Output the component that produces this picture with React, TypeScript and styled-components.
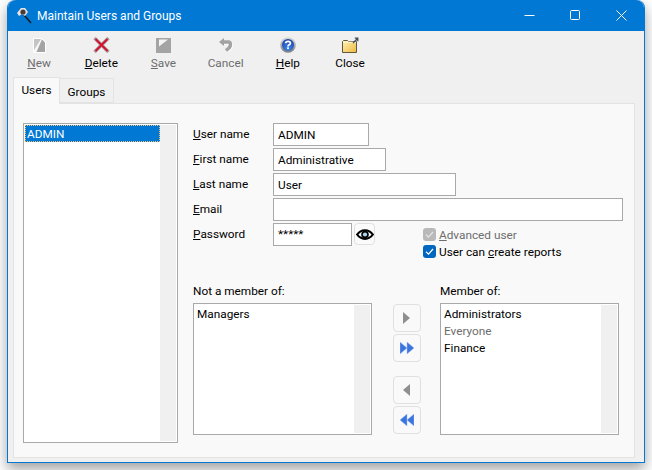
import styled, { createGlobalStyle } from "styled-components";
import { ReactNode } from "react";

const GlobalStyle = createGlobalStyle`
    html, body {
        margin: 0;
        padding: 0;
        background: #ffffff;
    }
    body {
        width: 652px;
        height: 470px;
        overflow: hidden;
        font-family: Roboto, "Noto Sans", "Liberation Sans", sans-serif;
        font-size: 11.8px;
        color: #000000;
    }
`;

const Window = styled.div`
    box-sizing: border-box;
    width: 638px;
    height: 463px;
    margin-left: 7px;
    display: flex;
    flex-direction: column;
    background: #f0f0f0;
    border: 1px solid #0078d4;
    border-top: 0;
    border-radius: 8px 8px 0 0;
    box-shadow: 0 6px 14px rgba(0, 0, 0, 0.38);
`;

const TitleBar = styled.div`
    height: 31px;
    flex: none;
    display: flex;
    align-items: center;
    background: #0078d4;
    color: #ffffff;
    border-radius: 8px 8px 0 0;
    padding-left: 8px;
`;

const TitleText = styled.span`
    margin-left: 5px;
    font-size: 12px;
`;

const WindowButtons = styled.div`
    margin-left: auto;
    display: flex;
`;

const WindowButton = styled.div`
    width: 46px;
    height: 31px;
    display: flex;
    align-items: center;
    justify-content: center;
`;

const Toolbar = styled.div`
    height: 46px;
    flex: none;
    display: flex;
`;

const ToolButton = styled.div<{ $disabled?: boolean }>`
    width: 62.2px;
    display: flex;
    flex-direction: column;
    align-items: center;
    padding-top: 5px;
    color: ${(p) => (p.$disabled ? "#6d6d6d" : "#000000")};
`;

const ToolIcon = styled.div`
    height: 18px;
    display: flex;
    align-items: center;
    justify-content: center;
`;

const ToolLabel = styled.span`
    margin-top: 1px;
    line-height: 17px;
`;

const TabStrip = styled.div`
    height: 26px;
    flex: none;
    display: flex;
    align-items: flex-end;
    padding-left: 5px;
    position: relative;
    z-index: 1;
`;

const Tab = styled.div<{ $active?: boolean }>`
    box-sizing: border-box;
    height: ${(p) => (p.$active ? "27px" : "25px")};
    margin-bottom: ${(p) => (p.$active ? "-1px" : "0")};
    width: ${(p) => (p.$active ? "47px" : "54px")};
    padding: ${(p) => (p.$active ? "0 0 3px" : "3px 0 0")};
    display: flex;
    align-items: center;
    justify-content: center;
    background: ${(p) => (p.$active ? "#f9f9f9" : "#f0f0f0")};
    border: 1px solid #e3e3e3;
    border-left-width: ${(p) => (p.$active ? "1px" : "0")};
    border-bottom-width: ${(p) => (p.$active ? "0" : "1px")};
`;

const TabPage = styled.div`
    box-sizing: border-box;
    width: 622px;
    height: 355px;
    margin-left: 5px;
    display: flex;
    padding: 19px 0 0 9px;
    background: #f9f9f9;
    border: 1px solid #e3e3e3;
`;

const ListBox = styled.div<{ $w: number; $h: number }>`
    box-sizing: border-box;
    width: ${(p) => p.$w}px;
    height: ${(p) => p.$h}px;
    flex: none;
    display: flex;
    padding: 1px;
    background: #ffffff;
    border: 1px solid #a9a9a9;
`;

const ListItems = styled.div`
    flex: 1;
    min-width: 0;
`;

const ListItem = styled.div<{ $selected?: boolean; $disabled?: boolean }>`
    height: 17px;
    line-height: 19px;
    padding-left: 2px;
    color: ${(p) => (p.$selected ? "#ffffff" : p.$disabled ? "#6d6d6d" : "#000000")};
    background: ${(p) => (p.$selected ? "#0078d4" : "transparent")};
    outline: ${(p) => (p.$selected ? "1px dotted #f4c27a" : "none")};
    outline-offset: -1px;
`;

const ScrollTrack = styled.div`
    width: 16px;
    flex: none;
    background: #f0f0f0;
`;

const Form = styled.div`
    margin-left: 15px;
    flex: 1;
    display: flex;
    flex-direction: column;
`;

const FieldRow = styled.div`
    display: flex;
    align-items: flex-start;
    margin-bottom: 2px;
`;

const FieldLabel = styled.label`
    width: 80px;
    height: 23px;
    flex: none;
    line-height: 23px;
`;

const TextBox = styled.div<{ $w: number }>`
    box-sizing: border-box;
    width: ${(p) => p.$w}px;
    height: 23px;
    flex: none;
    line-height: 22px;
    padding-left: 4px;
    background: #ffffff;
    border: 1px solid #a9a9a9;
`;

const Stars = styled.span`
    position: relative;
    top: -1px;
`;

const EyeButton = styled.div`
    box-sizing: border-box;
    width: 21px;
    height: 22px;
    margin-left: 2px;
    display: flex;
    align-items: center;
    justify-content: center;
    background: #fbfbfb;
    border: 1px solid #e0e0e0;
    border-radius: 4px;
`;

const CheckGroup = styled.div`
    margin-left: 48px;
    padding-top: 5px;
    display: flex;
    flex-direction: column;
    gap: 4px;
`;

const CheckRow = styled.div<{ $disabled?: boolean }>`
    display: flex;
    align-items: center;
    height: 13px;
    gap: 3px;
    color: ${(p) => (p.$disabled ? "#6d6d6d" : "#000000")};
`;

const CheckBox = styled.div<{ $disabled?: boolean }>`
    width: 13px;
    height: 13px;
    border-radius: 3px;
    display: flex;
    align-items: center;
    justify-content: center;
    background: ${(p) => (p.$disabled ? "#b9b9b9" : "#0067c0")};
`;

const Members = styled.div`
    display: grid;
    grid-template-columns: 179px 68px 179px;
    margin-top: 22px;
`;

const MemberColumn = styled.div`
    display: flex;
    flex-direction: column;
`;

const MemberTitle = styled.div`
    height: 21px;
    line-height: 18px;
`;

const MoveButtons = styled.div`
    display: flex;
    flex-direction: column;
    align-items: center;
    padding: 22px 0 0 1px;
`;

const MoveButton = styled.div<{ $gap?: boolean }>`
    box-sizing: border-box;
    width: 28px;
    height: 28px;
    margin-bottom: ${(p) => (p.$gap ? "14px" : "2px")};
    display: flex;
    align-items: center;
    justify-content: center;
    background: #f9f9f9;
    border: 1px solid #e0e0e0;
    border-radius: 4px;
`;

function Under({ children }: { children: ReactNode }) {
    return <u>{children}</u>;
}

function ArrowIcon({ dir, double }: { dir: "left" | "right"; double?: boolean }) {
    const width = double ? 14 : 7;
    const flip = dir === "left" ? `translate(${width} 0) scale(-1 1)` : undefined;
    const right = "M0 0L7 6L0 12Z";
    if (!double) {
        return (
            <svg width={width} height="12" viewBox={`0 0 ${width} 12`}>
                <path d={right} fill="#8f8f8f" transform={flip} />
            </svg>
        );
    }
    return (
        <svg width={width} height="12" viewBox={`0 0 ${width} 12`}>
            <g transform={flip} fill="#3b74dc" stroke="#9dbcf2" strokeWidth="0.5">
                <path d={right} />
                <path d={right} transform="translate(7 0)" />
            </g>
        </svg>
    );
}

const NewIcon = () => (
    <svg width="13" height="15" viewBox="0 0 13 15">
        <path d="M0.5 0.5H9L12.5 4V14.5H0.5Z" fill="#f6f6f6" stroke="#ffffff" />
        <path d="M1 1H8L1 12Z" fill="#c4c4c4" />
        <path d="M9 1.5L12 4.5V14H3.5Z" fill="#a3a3a3" />
    </svg>
);

const DeleteIcon = () => (
    <svg width="17" height="16" viewBox="0 0 17 16">
        <path d="M1.5 1L15.5 15M15.5 1L1.5 15" stroke="#6e5a60" strokeWidth="3.4" opacity="0.55" />
        <path d="M2.5 2L14.5 14M14.5 2L2.5 14" stroke="#d3142e" strokeWidth="2" />
    </svg>
);

const SaveIcon = () => (
    <svg width="15" height="15" viewBox="0 0 15 15">
        <rect width="15" height="15" fill="#a4a4a4" />
        <path d="M3 1.5H12L3 8.5Z" fill="#f4f4f4" />
    </svg>
);

const CancelIcon = () => (
    <svg width="14" height="14" viewBox="0 0 14 14">
        <path d="M4 4.5H9.5C12.5 4.5 12.5 8.5 10.5 10.5L7.5 13" fill="none" stroke="#fafafa" strokeWidth="4.4" />
        <path d="M4 4H9.5C12 4 12 8 10 10L7 12.5" fill="none" stroke="#a2a2a2" strokeWidth="3.4" />
        <path d="M0 4L5 0V8Z" fill="#a2a2a2" />
    </svg>
);

const HelpIcon = () => (
    <svg width="16" height="16" viewBox="0 0 16 16">
        <defs>
            <radialGradient id="helpFill" cx="0.5" cy="0.75" r="0.7">
                <stop offset="0" stopColor="#3f86ee" />
                <stop offset="1" stopColor="#1c43a8" />
            </radialGradient>
            <linearGradient id="helpRing" x1="0" y1="0" x2="0" y2="1">
                <stop offset="0" stopColor="#dcdcdc" />
                <stop offset="1" stopColor="#7c7c7c" />
            </linearGradient>
        </defs>
        <circle cx="8" cy="8" r="7.8" fill="url(#helpRing)" />
        <circle cx="8" cy="8" r="6" fill="url(#helpFill)" />
        <path d="M5.6 6.3C5.8 3.8 10.4 3.8 10.4 6.3C10.4 8 8 7.7 8 9.4" fill="none" stroke="#ffffff" strokeWidth="1.7" />
        <rect x="7.1" y="10.3" width="1.8" height="1.8" fill="#ffffff" />
    </svg>
);

const CloseIcon = () => (
    <svg width="17" height="16" viewBox="0 0 17 16">
        <defs>
            <linearGradient id="folderFill" x1="0" y1="0" x2="1" y2="1">
                <stop offset="0" stopColor="#fff3b8" />
                <stop offset="1" stopColor="#eeb93e" />
            </linearGradient>
        </defs>
        <path d="M0.5 4.5V15.5H14.5V4.5H6.5L5.5 3.5H1.5Z" fill="url(#folderFill)" stroke="#62583a" />
        <path d="M1 5.2H14" stroke="#fffbe0" />
        <path d="M11 6L15 2M12.8 1.2H15.8V4.2" fill="none" stroke="#3f4a5c" strokeWidth="1.3" />
    </svg>
);

const AppIcon = () => (
    <svg width="16" height="18" viewBox="0 0 16 18">
        <path d="M8 8L15 16" stroke="#1b1b1b" strokeWidth="1.5" />
        <path d="M1 6L5 1H9L12 5L9 9L6 7L3 9Z" fill="#e4e4e4" />
        <circle cx="7" cy="5" r="2.6" fill="#4b3a32" />
    </svg>
);

const EyeIcon = () => (
    <svg width="18" height="13" viewBox="0 0 18 13">
        <path d="M1.2 6.5C5 0.8 13 0.8 16.8 6.5C13 12.2 5 12.2 1.2 6.5Z" fill="#ffffff" stroke="#000000" strokeWidth="2.2" />
        <circle cx="9" cy="6.5" r="3.8" fill="#000000" />
        <circle cx="9" cy="6.5" r="2.1" fill="#a9d6ee" />
    </svg>
);

const Tick = ({ color }: { color: string }) => (
    <svg width="11" height="11" viewBox="0 0 11 11">
        <path d="M2 5.8L4.5 8.2L9 3" fill="none" stroke={color} strokeWidth="1.2" />
    </svg>
);

function App() {
    return (
        <>
            <GlobalStyle />
            <Window>
                <TitleBar>
                    <AppIcon />
                    <TitleText>Maintain Users and Groups</TitleText>
                    <WindowButtons>
                        <WindowButton>
                            <svg width="11" height="11" viewBox="0 0 11 11">
                                <path d="M0.5 5.5H10.5" stroke="#ffffff" />
                            </svg>
                        </WindowButton>
                        <WindowButton>
                            <svg width="11" height="11" viewBox="0 0 11 11">
                                <rect x="0.5" y="0.5" width="9" height="9" rx="1" fill="none" stroke="#ffffff" />
                            </svg>
                        </WindowButton>
                        <WindowButton>
                            <svg width="11" height="11" viewBox="0 0 11 11">
                                <path d="M0.5 0.5L10.5 10.5M10.5 0.5L0.5 10.5" stroke="#ffffff" />
                            </svg>
                        </WindowButton>
                    </WindowButtons>
                </TitleBar>
                <Toolbar>
                    <ToolButton $disabled>
                        <ToolIcon><NewIcon /></ToolIcon>
                        <ToolLabel><Under>N</Under>ew</ToolLabel>
                    </ToolButton>
                    <ToolButton>
                        <ToolIcon><DeleteIcon /></ToolIcon>
                        <ToolLabel><Under>D</Under>elete</ToolLabel>
                    </ToolButton>
                    <ToolButton $disabled>
                        <ToolIcon><SaveIcon /></ToolIcon>
                        <ToolLabel><Under>S</Under>ave</ToolLabel>
                    </ToolButton>
                    <ToolButton $disabled>
                        <ToolIcon><CancelIcon /></ToolIcon>
                        <ToolLabel>Cancel</ToolLabel>
                    </ToolButton>
                    <ToolButton>
                        <ToolIcon><HelpIcon /></ToolIcon>
                        <ToolLabel><Under>H</Under>elp</ToolLabel>
                    </ToolButton>
                    <ToolButton>
                        <ToolIcon><CloseIcon /></ToolIcon>
                        <ToolLabel>Close</ToolLabel>
                    </ToolButton>
                </Toolbar>
                <TabStrip>
                    <Tab $active>Users</Tab>
                    <Tab>Groups</Tab>
                </TabStrip>
                <TabPage>
                    <ListBox $w={155} $h={320}>
                        <ListItems>
                            <ListItem $selected>ADMIN</ListItem>
                        </ListItems>
                        <ScrollTrack />
                    </ListBox>
                    <Form>
                        <FieldRow>
                            <FieldLabel><Under>U</Under>ser name</FieldLabel>
                            <TextBox $w={96}>ADMIN</TextBox>
                        </FieldRow>
                        <FieldRow>
                            <FieldLabel><Under>F</Under>irst name</FieldLabel>
                            <TextBox $w={113}>Administrative</TextBox>
                        </FieldRow>
                        <FieldRow>
                            <FieldLabel><Under>L</Under>ast name</FieldLabel>
                            <TextBox $w={183}>User</TextBox>
                        </FieldRow>
                        <FieldRow>
                            <FieldLabel><Under>E</Under>mail</FieldLabel>
                            <TextBox $w={350} />
                        </FieldRow>
                        <FieldRow>
                            <FieldLabel><Under>P</Under>assword</FieldLabel>
                            <TextBox $w={79}><Stars>*****</Stars></TextBox>
                            <EyeButton><EyeIcon /></EyeButton>
                            <CheckGroup>
                                <CheckRow $disabled>
                                    <CheckBox $disabled><Tick color="#e4e4e4" /></CheckBox>
                                    <span><Under>A</Under>dvanced user</span>
                                </CheckRow>
                                <CheckRow>
                                    <CheckBox><Tick color="#ffffff" /></CheckBox>
                                    <span>User can <Under>c</Under>reate reports</span>
                                </CheckRow>
                            </CheckGroup>
                        </FieldRow>
                        <Members>
                            <MemberColumn>
                                <MemberTitle>Not a member of:</MemberTitle>
                                <ListBox $w={179} $h={132}>
                                    <ListItems>
                                        <ListItem>Managers</ListItem>
                                    </ListItems>
                                    <ScrollTrack />
                                </ListBox>
                            </MemberColumn>
                            <MoveButtons>
                                <MoveButton><ArrowIcon dir="right" /></MoveButton>
                                <MoveButton $gap><ArrowIcon dir="right" double /></MoveButton>
                                <MoveButton><ArrowIcon dir="left" /></MoveButton>
                                <MoveButton><ArrowIcon dir="left" double /></MoveButton>
                            </MoveButtons>
                            <MemberColumn>
                                <MemberTitle>Member of:</MemberTitle>
                                <ListBox $w={179} $h={132}>
                                    <ListItems>
                                        <ListItem>Administrators</ListItem>
                                        <ListItem $disabled>Everyone</ListItem>
                                        <ListItem>Finance</ListItem>
                                    </ListItems>
                                    <ScrollTrack />
                                </ListBox>
                            </MemberColumn>
                        </Members>
                    </Form>
                </TabPage>
            </Window>
        </>
    );
}

export default App;
